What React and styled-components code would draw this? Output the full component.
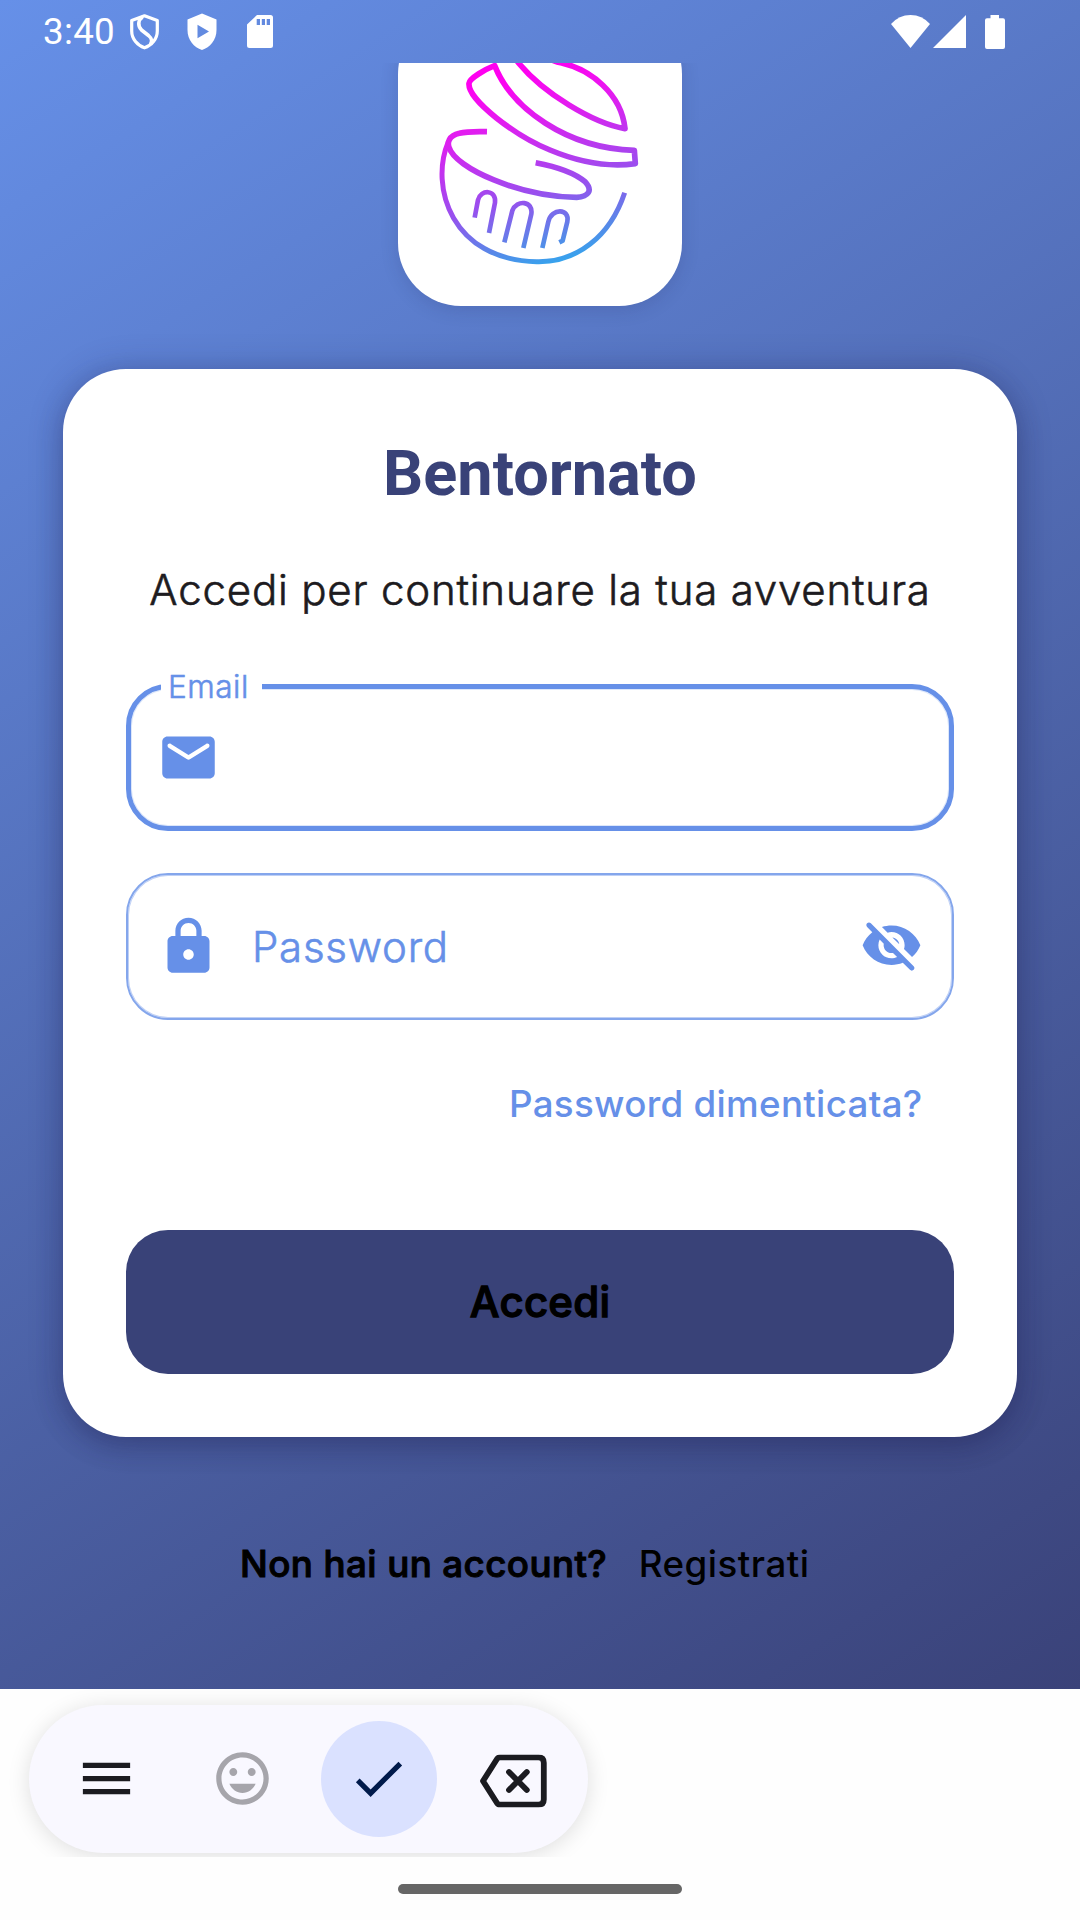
import React from "react";
import styled, { createGlobalStyle, css } from "styled-components";

const blue = "#6690e8";
const navy = "#394278";

const GlobalStyle = createGlobalStyle`
  * { box-sizing: border-box; }
  body { margin: 0; background: #fff; }
`;

const lightText = css`
  font-weight: 300;
  -webkit-text-stroke: 0.6px currentColor;
`;

const Screen = styled.div`
  width: 1080px;
  height: 1920px;
  display: flex;
  flex-direction: column;
  overflow: hidden;
  background: #fefefe;
  font-family: Inter, "Liberation Sans", sans-serif;
`;

const Scene = styled.div`
  height: 1689px;
  flex: none;
  display: flex;
  flex-direction: column;
  background: linear-gradient(147.4deg, #6690e8 0%, #3a4279 100%);
`;

const StatusBar = styled.header`
  height: 63px;
  flex: none;
  display: flex;
  align-items: center;
  padding: 0 75.5px 0 43px;
  color: #fff;
`;

const Clock = styled.span`
  width: 87px;
  font: 400 36.75px/62px Roboto, sans-serif;
  letter-spacing: 0.3px;
`;

const StatusIcon = styled.svg`
  display: block;
  flex: none;
  margin-left: ${(p) => p.$gap || 0}px;
`;

const Spacer = styled.div`
  flex: 1;
`;

const Content = styled.main`
  flex: 1;
  min-height: 0;
  overflow: hidden;
  display: flex;
  flex-direction: column;
  align-items: center;
  padding: 0 63px;
`;

const LogoTile = styled.div`
  width: 284px;
  height: 295px;
  flex: none;
  margin-top: -52px;
  border-radius: 63px;
  background: #fff;
  box-shadow: 0 4px 18px rgba(30, 40, 90, 0.16);
  svg { display: block; width: 100%; height: 100%; }
`;

const Card = styled.section`
  width: 954px;
  flex: none;
  margin-top: 63px;
  padding: 63px;
  border-radius: 63px;
  background: #fff;
  display: flex;
  flex-direction: column;
  box-shadow: 0 10px 26px rgba(30, 30, 80, 0.3), 0 0 36px rgba(30, 30, 80, 0.2);
`;

const Title = styled.h1`
  margin: 0;
  text-align: center;
  color: ${navy};
  font: 700 63px/84px Roboto, sans-serif;
`;

const Subtitle = styled.p`
  margin: 42px 0 63px;
  text-align: center;
  white-space: nowrap;
  color: #1d1b20;
  font-size: 42px;
  line-height: 63px;
  letter-spacing: 0.8px;
  ${lightText}
`;

const Field = styled.div`
  position: relative;
  height: 147px;
  display: flex;
  align-items: center;
  padding: ${(p) => (p.$focused ? "0 26px" : "0 29.5px 0 29px")};
  border: ${(p) => (p.$focused ? `5px solid ${blue}` : "2px solid #84a6ec")};
  border-radius: 42px;
  box-shadow: inset 0 0 0 1px rgba(102, 144, 232, ${(p) => (p.$focused ? 0.22 : 0.42)});
  color: ${blue};
  ${lightText}
  & + & { margin-top: 42px; }
`;

const FloatingLabel = styled.label`
  position: absolute;
  left: 29.5px;
  top: -23px;
  width: 101px;
  padding-left: 7.5px;
  background: #fff;
  font-size: 31.5px;
  line-height: 42px;
  letter-spacing: 0.5px;
`;

const FieldLabel = styled.label`
  flex: 1;
  margin-left: 32px;
  font-size: 42px;
  line-height: 63px;
  letter-spacing: 0.75px;
`;

const Glyph = styled.svg`
  display: block;
  flex: none;
  width: 63px;
  height: 63px;
  fill: currentColor;
`;

const TextLink = styled.a`
  color: ${(p) => p.$color};
  font-size: 36.75px;
  font-weight: 500;
  line-height: 126px;
  letter-spacing: ${(p) => p.$spacing || 0.29}px;
`;

const ForgotRow = styled.div`
  display: flex;
  justify-content: flex-end;
  margin-top: 21px;
  padding-right: 31.5px;
`;

const SubmitButton = styled.button`
  height: 144px;
  margin: 63px 0 0;
  padding: 0;
  border: 0;
  border-radius: 42px;
  background: ${navy};
  color: #000;
  font: 500 42px/144px Inter, sans-serif;
  letter-spacing: 0.2px;
  -webkit-text-stroke: 1.3px #000;
`;

const Footer = styled.footer`
  display: flex;
  align-self: flex-start;
  gap: 31.5px;
  margin: 64px 0 0 177px;
  white-space: nowrap;
`;

const Question = styled.span`
  font-size: 36.75px;
  font-weight: 500;
  line-height: 126px;
  letter-spacing: 0.4px;
  -webkit-text-stroke: 1px #000;
`;

const KeyboardArea = styled.div`
  height: 168px;
  flex: none;
  overflow: hidden;
  padding: 15.500px 28.5px;
`;

const KeyboardPill = styled.div`
  width: 559px;
  height: 148px;
  border-radius: 74px;
  background: #f9f8ff;
  box-shadow: 0 3px 22px rgba(0, 0, 0, 0.13);
  display: flex;
  align-items: center;
  padding-left: 20px;
`;

const Key = styled.div`
  width: 116px;
  height: 116px;
  margin-right: ${(p) => p.$gap || 0}px;
  border-radius: 50%;
  display: flex;
  align-items: center;
  justify-content: center;
  background: ${(p) => p.$bg || "transparent"};
  color: ${(p) => p.$color || "#1b1b20"};
`;

const NavBar = styled.nav`
  flex: 1;
  display: flex;
  justify-content: center;
  padding-top: 27px;
`;

const Handle = styled.div`
  width: 284px;
  height: 10px;
  border-radius: 5px;
  background: #666;
`;

const Logo = () => (
  <svg viewBox="54 -87 852 885" fill="none" stroke="url(#brand)" strokeWidth="17" strokeLinecap="butt" strokeLinejoin="round">
    <defs>
      <linearGradient id="brand" gradientUnits="userSpaceOnUse" x1="350" y1="110" x2="500" y2="690">
        <stop offset="0" stopColor="#ff00f0" />
        <stop offset="0.2" stopColor="#e818f0" />
        <stop offset="0.62" stopColor="#9850ee" />
        <stop offset="0.85" stopColor="#5888e8" />
        <stop offset="1" stopColor="#30a8ee" />
      </linearGradient>
    </defs>
    <path d="M735 266C640 250 490 160 415 68C380 20 400 10 440 10C480 30 500 62 545 69C630 88 724 160 735 266Z" />
    <path d="M344 77C395 205 560 325 763 331L766 371C700 380 610 372 510 330C410 290 262 180 267 130C269 115 315 88 344 77Z" />
    <path d="M321 275C285 274 260 274 238 280C205 288 202 308 207 322C225 385 420 470 590 472C625 470 640 452 615 425C580 395 530 380 467 368" />
    <path d="M205 305C148 440 215 660 470 665C590 668 690 590 734 458" strokeWidth="15" />
    <g strokeWidth="14">
      <path d="M284 533L294 480C302 447 350 448 345 488L327 579" />
      <path d="M373 607L397 512C410 478 460 482 454 522L430 624" />
      <path d="M487 624L505 545C515 503 570 505 562 545L548 602L538 607" />
    </g>
  </svg>
);

export default function App() {
  return (
    <>
      <GlobalStyle />
      <Screen>
        <Scene>
          <StatusBar>
            <Clock>3:40</Clock>
            <StatusIcon width="29" height="36" viewBox="0 0 29 36" fill="none" stroke="#fff" strokeWidth="3.200" strokeLinejoin="round">
              <path d="M14.500 1.800L27.300 6.500V17C27.300 25 21.500 31.500 14.500 33.800C7.500 31.500 1.700 25 1.700 17V6.500Z" />
              <path d="M12.500 3C8 6 7.500 12 11.500 16L18.500 21.500C22.500 25 22 27 20.500 30.500" strokeWidth="3.600" />
            </StatusIcon>
            <StatusIcon $gap={28} width="30" height="38" viewBox="0 0 30 38" fill="#fff" fillRule="evenodd">
              <path d="M15 .5L29.500 6.500V17C29.500 27 23 34.500 15 37C7 34.500 .5 27 .5 17V6.500ZM10.500 11.800V25.200L22 18.500Z" />
            </StatusIcon>
            <StatusIcon $gap={30} width="26" height="33" viewBox="0 0 26 33" fill="#fff" fillRule="evenodd">
              <path d="M10 0H23.500Q26 0 26 2.500V30.500Q26 33 23.500 33H2.500Q0 33 0 30.500V9.500ZM9.700 4V10H13V4ZM14.800 4V10H18V4ZM19.700 4V10H23V4Z" />
            </StatusIcon>
            <Spacer />
            <StatusIcon width="39" height="33" viewBox="0 0 39 33" fill="#fff">
              <path d="M0 9Q8 0 19.500 0T39 9L19.500 33Z" />
            </StatusIcon>
            <StatusIcon $gap={2.5} width="33" height="33" viewBox="0 0 33 33" fill="#fff">
              <path d="M33 0V33H0Z" />
            </StatusIcon>
            <StatusIcon $gap={19} width="20" height="34" viewBox="0 0 20 34" fill="#fff">
              <path d="M5.500 0H14V3.300H18Q20 3.300 20 5.300V32Q20 34 18 34H2Q0 34 0 32V5.300Q0 3.300 2 3.300H5.500Z" />
            </StatusIcon>
          </StatusBar>
          <Content>
            <LogoTile>
              <Logo />
            </LogoTile>
            <Card>
              <Title>Bentornato</Title>
              <Subtitle>Accedi per continuare la tua avventura</Subtitle>
              <Field $focused>
                <FloatingLabel>Email</FloatingLabel>
                <Glyph viewBox="0 0 24 24">
                  <path d="M20 4H4c-1.100 0-2 .9-2 2v12c0 1.100.9 2 2 2h16c1.100 0 2-.9 2-2V6c0-1.100-.9-2-2-2zm-.4 4.250l-7.070 4.420c-.32.2-.74.2-1.060 0L4.400 8.250c-.25-.16-.4-.43-.4-.72 0-.67.73-1.070 1.300-.72L12 11l6.700-4.190c.57-.35 1.300.05 1.300.72 0 .29-.15.56-.4.72z" />
                </Glyph>
              </Field>
              <Field>
                <Glyph viewBox="0 0 24 24">
                  <path d="M18 8h-1V6c0-2.760-2.240-5-5-5S7 3.240 7 6v2H6c-1.100 0-2 .9-2 2v10c0 1.100.9 2 2 2h12c1.100 0 2-.9 2-2V10c0-1.100-.9-2-2-2zm-6 9c-1.100 0-2-.9-2-2s.9-2 2-2 2 .9 2 2-.9 2-2 2zM9 8V6c0-1.660 1.340-3 3-3s3 1.340 3 3v2H9z" />
                </Glyph>
                <FieldLabel>Password</FieldLabel>
                <Glyph viewBox="0 0 24 24">
                  <path d="M12 6.500c2.760 0 5 2.240 5 5 0 .51-.1 1-.24 1.460l3.060 3.060c1.390-1.230 2.490-2.770 3.180-4.530C21.270 7.110 17 4 12 4c-1.270 0-2.490.2-3.640.57l2.170 2.170c.47-.14.96-.24 1.470-.24zM2.710 3.160c-.39.39-.39 1.020 0 1.410l1.970 1.970C3.060 7.830 1.770 9.530 1 11.500 2.730 15.890 7 19 12 19c1.520 0 2.970-.3 4.310-.82l2.720 2.720c.39.39 1.020.39 1.410 0 .39-.39.39-1.020 0-1.410L4.130 3.160c-.39-.39-1.030-.39-1.420 0zM12 16.500c-2.760 0-5-2.240-5-5 0-.77.18-1.500.49-2.140l1.570 1.570c-.03.18-.06.37-.06.57 0 1.660 1.340 3 3 3 .2 0 .38-.03.57-.07L14.140 16c-.65.32-1.370.5-2.140.5zm2.970-5.330c-.15-1.400-1.250-2.490-2.640-2.640l2.640 2.640z" />
                </Glyph>
              </Field>
              <ForgotRow>
                <TextLink $color={blue}>Password dimenticata?</TextLink>
              </ForgotRow>
              <SubmitButton>Accedi</SubmitButton>
            </Card>
            <Footer>
              <Question>Non hai un account?</Question>
              <TextLink $color="#000" $spacing={0.5}>Registrati</TextLink>
            </Footer>
          </Content>
        </Scene>
        <KeyboardArea>
          <KeyboardPill>
            <Key $gap={20}>
              <Glyph viewBox="0 0 24 24">
                <path d="M3 18h18v-2H3v2zm0-5h18v-2H3v2zm0-7v2h18V6H3z" />
              </Glyph>
            </Key>
            <Key $gap={20} $color="#a6a5ab">
              <Glyph viewBox="0 0 24 24">
                <path d="M11.990 2C6.470 2 2 6.480 2 12s4.470 10 9.990 10C17.520 22 22 17.520 22 12S17.520 2 11.990 2zM12 20c-4.420 0-8-3.580-8-8s3.580-8 8-8 8 3.580 8 8-3.580 8-8 8zm3.500-9c.83 0 1.500-.67 1.500-1.500S16.330 8 15.500 8 14 8.670 14 9.500s.67 1.500 1.500 1.500zm-7 0c.83 0 1.500-.67 1.500-1.500S9.330 8 8.500 8 7 8.670 7 9.500 7.670 11 8.500 11zm3.500 6.500c2.200 0 4.100-1.400 5-3.500H7c.9 2.100 2.800 3.500 5 3.500z" />
              </Glyph>
            </Key>
            <Key $gap={19} $bg="#dae1ff" $color="#001a4b">
              <Glyph viewBox="0 0 24 24">
                <path d="M9 16.200L4.800 12l-1.400 1.400L9 19 21 7l-1.400-1.400z" />
              </Glyph>
            </Key>
            <Key>
              <svg width="67" height="53" viewBox="0 0 67 53" fill="none" stroke="currentColor" strokeWidth="5.800" strokeLinejoin="round" strokeLinecap="round" transform="translate(0 2.500)">
                <path d="M20 2.900H58.500Q63.800 2.900 63.800 8.200V45Q63.800 50.200 58.500 50.200H20Q18 50.200 17 48.500L3 26.500L17 4.500Q18 2.900 20 2.900Z" />
                <path d="M29 17.500L46.800 35.500M46.800 17.500L29 35.500" />
              </svg>
            </Key>
          </KeyboardPill>
        </KeyboardArea>
        <NavBar>
          <Handle />
        </NavBar>
      </Screen>
    </>
  );
}
